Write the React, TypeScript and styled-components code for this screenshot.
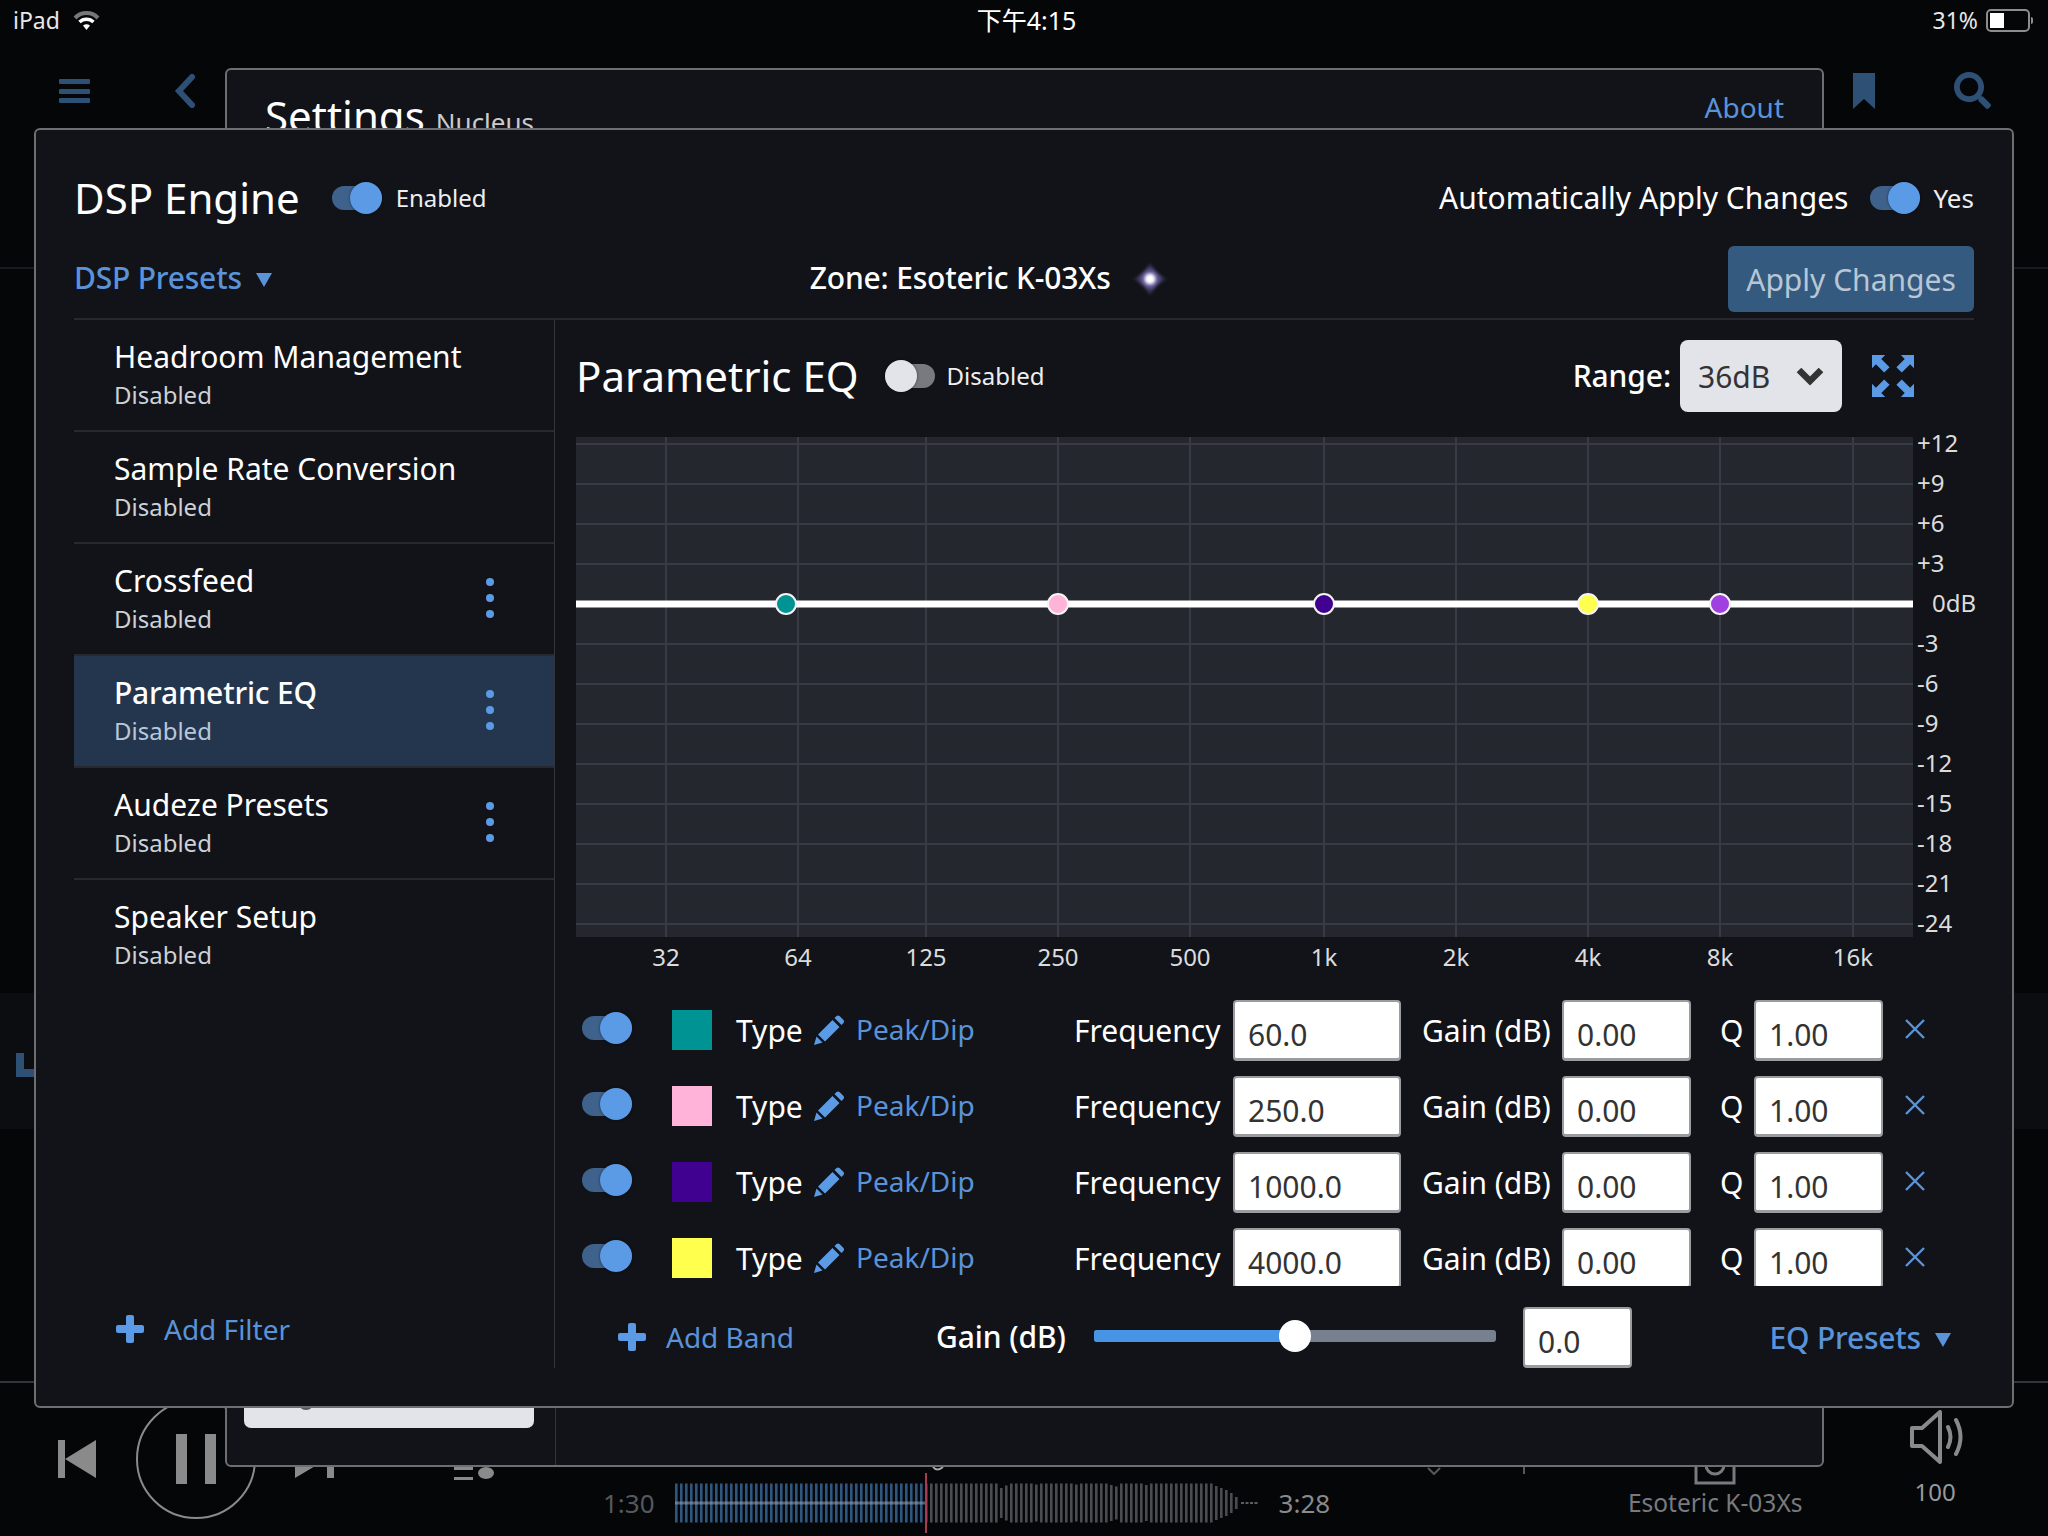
import React from 'react';
import styled, { createGlobalStyle } from 'styled-components';
import { FaSearch } from 'react-icons/fa';

const BLUE = '#5b9be6';
const LINK = '#5a93d9';
const DIM = '#2e5075';
const EDGE = '#6c6e72';
const SURFACE = '#111318';
const RULE = '#27292e';

const Global = createGlobalStyle`
  html, body { margin: 0; padding: 0; background: #050608; }
  body { font-family: "Noto Sans", "Noto Sans CJK SC", sans-serif; color: #fff; }
`;

const Page = styled.div`
  position: relative;
  width: 2048px;
  height: 1536px;
  overflow: hidden;
  background: #050608;
  display: flex;
  flex-direction: column;
`;

/* ---------- status bar ---------- */
const StatusBar = styled.div`
  height: 40px;
  display: grid;
  grid-template-columns: 1fr auto 1fr;
  align-items: center;
  padding: 0 18px 0 13px;
  font-size: 23px;
  color: #e8e8e8;
`;
const StatusLeft = styled.div`
  display: flex;
  align-items: center;
  gap: 13px;
`;
const StatusClock = styled.div`
  font-size: 25px;
  color: #fff;
  margin: -3px 0 0 10px;
`;
const StatusRight = styled.div`
  display: flex;
  align-items: center;
  justify-content: flex-end;
  gap: 8px;
`;
const Battery = styled.div`
  position: relative;
  width: 44px;
  height: 23px;
  box-sizing: border-box;
  border: 2px solid #8d8d8d;
  border-radius: 5px;
  padding: 2px;
  &::after {
    content: '';
    position: absolute;
    right: -5px;
    top: 6px;
    width: 2px;
    height: 7px;
    background: #8d8d8d;
    border-radius: 0 2px 2px 0;
  }
`;
const BatteryLevel = styled.div`
  width: 14px;
  height: 100%;
  background: #fff;
`;

/* ---------- app behind the dialog ---------- */
const AppHeader = styled.div`
  height: 229px;
  border-bottom: 2px solid #191a1e;
  display: flex;
  align-items: flex-start;
  padding: 32px 57px 0 59px;
  margin-bottom: -1px;
  box-sizing: border-box;
`;
const Burger = styled.div`
  width: 31px;
  height: 24px;
  margin-top: 7px;
  display: flex;
  flex-direction: column;
  justify-content: space-between;
  & > span {
    height: 5px;
    border-radius: 1px;
    background: ${DIM};
  }
`;
const BackIcon = styled.svg`
  width: 22px;
  height: 34px;
  margin: 2px 0 0 84px;
`;
const HeaderRight = styled.div`
  margin-left: auto;
  display: flex;
  gap: 78px;
  color: ${DIM};
`;
const Main = styled.div`
  flex: 1;
  padding-top: 725px;
`;
const Band = styled.div`
  height: 136px;
  background: #0c0d10;
  display: flex;
  align-items: flex-end;
  padding: 0 0 52px 16px;
  box-sizing: border-box;
`;
const BandMark = styled.div`
  width: 19px;
  height: 24px;
  box-sizing: border-box;
  border-left: 8px solid ${DIM};
  border-bottom: 8px solid ${DIM};
`;

const BackPanel = styled.div`
  position: absolute;
  left: 225px;
  top: 68px;
  width: 1599px;
  height: 1399px;
  box-sizing: border-box;
  background: ${SURFACE};
  border: 2px solid ${EDGE};
  border-radius: 6px;
  display: flex;
  flex-direction: column;
  padding: 21px 0 37px;
  &::after {
    content: '';
    position: absolute;
    left: 328px;
    top: 1300px;
    bottom: 0;
    width: 1px;
    background: #33353a;
  }
`;
const BackTitleRow = styled.div`
  display: flex;
  align-items: flex-start;
  padding: 0 38px 0 38px;
`;
const BackTitle = styled.div`
  font-size: 42px;
  line-height: 50px;
`;
const BackSubtitle = styled.span`
  font-size: 26px;
  margin-left: 11px;
  color: #ccc;
`;
const AboutLink = styled.div`
  margin: -4px 0 0 auto;
  font-size: 28px;
  line-height: 40px;
  color: ${LINK};
`;
const BackStrip = styled.div`
  position: relative;
  margin: auto 0 0 17px;
  width: 290px;
  height: 30px;
  border-radius: 0 0 7px 7px;
  background: #e2e4e9;
  &::before {
    content: '';
    position: absolute;
    left: 54px;
    top: -4px;
    width: 16px;
    height: 16px;
    border-radius: 50%;
    background: #55575c;
  }
`;

/* ---------- player ---------- */
const Player = styled.div`
  height: 155px;
  box-sizing: border-box;
  border-top: 2px solid #34353a;
  display: flex;
  align-items: flex-start;
  padding-left: 58px;
  color: #8a8a8a;
`;
const Transport = styled.div`
  height: 120px;
  margin-top: 16px;
  display: flex;
  align-items: center;
`;
const PlayCircle = styled.div`
  width: 120px;
  height: 120px;
  box-sizing: border-box;
  margin: 0 39px 0 40px;
  border: 2px solid #8a8a8a;
  border-radius: 50%;
  display: flex;
  align-items: center;
  justify-content: center;
  gap: 18px;
  & > span {
    width: 11px;
    height: 50px;
    background: #8a8a8a;
  }
`;
const QueueIcon = styled.svg`
  width: 41px;
  height: 46px;
  margin: 0 0 0 120px;
`;
const Timeline = styled.div`
  height: 60px;
  margin: 90px 0 0 108px;
  display: flex;
  align-items: center;
`;
const TimeText = styled.div<{ $bright?: boolean }>`
  font-size: 26px;
  color: ${p => (p.$bright ? '#8a8a8a' : '#55585c')};
`;
const Wave = styled.svg`
  width: 582px;
  height: 60px;
  margin: 0 22px 0 20px;
  overflow: visible;
`;
const TickIcon = styled.svg`
  width: 14px;
  height: 8px;
  margin: 84px 0 0 97px;
`;
const TickLine = styled.div`
  width: 2px;
  height: 7px;
  margin: 84px 0 0 82px;
  background: #55585c;
`;
const DeviceBlock = styled.div`
  margin: 64px 0 0 102px;
  width: 176px;
  display: flex;
  flex-direction: column;
  align-items: center;
`;
const DeviceIcon = styled.svg`
  width: 42px;
  height: 38px;
`;
const DeviceName = styled.div`
  font-size: 24.5px;
  line-height: 36px;
  color: #777a7e;
  white-space: nowrap;
`;
const VolumeBlock = styled.div`
  margin: 27px 0 0 103px;
  width: 58px;
  display: flex;
  flex-direction: column;
  align-items: center;
`;
const VolumeIcon = styled.svg`
  width: 58px;
  height: 54px;
  flex: none;
  margin-left: 6px;
`;
const VolumeValue = styled.div`
  margin-top: 13px;
  font-size: 24px;
  line-height: 30px;
  color: #999;
`;

/* ---------- dialog ---------- */
const Dialog = styled.div`
  position: absolute;
  left: 34px;
  top: 128px;
  width: 1980px;
  height: 1280px;
  box-sizing: border-box;
  background: ${SURFACE};
  border: 2px solid ${EDGE};
  border-radius: 6px;
  padding: 38px 38px 0 38px;
  display: flex;
  flex-direction: column;
`;
const TopRow = styled.div`
  height: 60px;
  display: flex;
  align-items: center;
`;
const DialogTitle = styled.div`
  font-size: 42px;
  margin: -2px 32px 0 0;
`;
const ToggleTrack = styled.div<{ $on: boolean }>`
  position: relative;
  width: 50px;
  height: 24px;
  flex: none;
  border-radius: 12px;
  background: ${p => (p.$on ? '#3f628c' : '#777a7e')};
  &::after {
    content: '';
    position: absolute;
    top: -4px;
    left: ${p => (p.$on ? '18px' : '0')};
    width: 32px;
    height: 32px;
    border-radius: 50%;
    background: ${p => (p.$on ? BLUE : '#e2e4ea')};
    box-shadow: 0 0 3px rgba(0, 0, 0, 0.5);
  }
`;
const ToggleText = styled.div`
  margin: -1px 0 0 14px;
  font-size: 24px;
  color: #eee;
`;
const AutoApply = styled.div`
  margin-left: auto;
  display: flex;
  align-items: center;
  gap: 22px;
  font-size: 30px;
`;
const AutoLabel = styled.span`
  margin-top: -2px;
`;
const AutoValue = styled(ToggleText)`
  margin-left: -9px;
  font-size: 26px;
`;
const SecondRow = styled.div`
  height: 66px;
  margin: 18px 0 6px;
  display: flex;
  align-items: center;
`;
const MenuLink = styled.div<{ $lift?: number }>`
  display: flex;
  align-items: center;
  gap: 14px;
  font-size: 30px;
  font-weight: 500;
  letter-spacing: -0.2px;
  color: ${LINK};
  padding-bottom: ${p => p.$lift ?? 0}px;
`;
const DownCaret = styled.span`
  width: 0;
  height: 0;
  border-left: 8px solid transparent;
  border-right: 8px solid transparent;
  border-top: 14px solid ${LINK};
  margin-top: 5px;
`;
const ZoneBlock = styled.div`
  margin-left: 538px;
  display: flex;
  align-items: center;
  gap: 19px;
  font-size: 30px;
  font-weight: 500;
  letter-spacing: -0.2px;
  padding-bottom: 4px;
`;
const ZoneStar = styled.svg`
  width: 40px;
  height: 40px;
  margin-top: 4px;
`;
const ApplyButton = styled.div`
  margin-left: auto;
  width: 246px;
  height: 66px;
  border-radius: 6px;
  background: #355a80;
  color: #b9c6d4;
  font-size: 30px;
  display: flex;
  align-items: center;
  justify-content: center;
`;
const Body = styled.div`
  height: 1048px;
  border-top: 2px solid ${RULE};
  display: flex;
`;
const Sidebar = styled.div`
  width: 481px;
  flex: none;
  box-sizing: border-box;
  border-right: 1px solid #33353a;
  display: flex;
  flex-direction: column;
`;
const FilterItem = styled.div<{ $active?: boolean; $last?: boolean }>`
  height: 112px;
  flex: none;
  box-sizing: border-box;
  display: flex;
  align-items: center;
  justify-content: space-between;
  padding: 0 60px 0 40px;
  background: ${p => (p.$active ? '#24364d' : 'transparent')};
  border-bottom: ${p => (p.$last ? 'none' : `2px solid ${RULE}`)};
`;
const FilterText = styled.div`
  align-self: flex-start;
  padding-top: 18px;
`;
const FilterName = styled.div<{ $active?: boolean }>`
  font-size: 30px;
  line-height: 38px;
  font-weight: ${p => (p.$active ? 500 : 400)};
  letter-spacing: ${p => (p.$active ? '-0.2px' : '0')};
  white-space: nowrap;
`;
const FilterStatus = styled.div<{ $active?: boolean }>`
  font-size: 24px;
  line-height: 38px;
  color: ${p => (p.$active ? '#b8c7da' : '#cdd0d5')};
`;
const Dots = styled.div`
  display: flex;
  flex-direction: column;
  gap: 8px;
  margin-top: -3px;
  & > span {
    width: 8px;
    height: 8px;
    border-radius: 50%;
    background: ${BLUE};
  }
`;
const AddFilter = styled.div`
  margin-top: auto;
  margin-bottom: 9px;
  height: 60px;
  padding-left: 41px;
  display: flex;
  align-items: center;
  gap: 19px;
  font-size: 28px;
  color: ${LINK};
`;
const PlusIcon = styled.svg`
  width: 30px;
  height: 30px;
  flex: none;
`;
const EqPane = styled.div`
  flex: 1;
  min-width: 0;
  padding-left: 21px;
  display: flex;
  flex-direction: column;
`;
const EqHeader = styled.div`
  height: 112px;
  flex: none;
  margin-bottom: 5px;
  display: flex;
  align-items: center;
  padding-right: 60px;
`;
const EqTitle = styled.div`
  font-size: 42px;
  margin: -2px 26px 0 0;
`;
const EqState = styled(ToggleText)`
  margin-left: 12px;
`;
const RangeGroup = styled.div`
  margin-left: auto;
  display: flex;
  align-items: center;
`;
const RangeLabel = styled.div`
  font-size: 30px;
  font-weight: 500;
  letter-spacing: -0.1px;
  margin: -2px 9px 0 0;
`;
const RangeSelect = styled.div`
  width: 162px;
  height: 72px;
  box-sizing: border-box;
  border-radius: 8px;
  background: #e2e4e9;
  color: #333;
  font-size: 30px;
  padding: 0 17px 0 18px;
  display: flex;
  align-items: center;
  justify-content: space-between;
`;
const ExpandIcon = styled.svg`
  width: 42px;
  height: 42px;
  margin-left: 30px;
`;
const ChartSvg = styled.svg`
  display: block;
  width: 1410px;
  height: 565px;
  margin: -10px -12px 0 0;
  flex: none;
`;
const AxisLabel = styled.text`
  font-size: 24px;
  fill: #dcdcdc;
`;
const BandList = styled.div`
  height: 294px;
  flex: none;
  overflow: hidden;
`;
const BandRow = styled.div`
  height: 76px;
  display: grid;
  grid-template-columns: 95px 64px 79px 42px 218px 159px 168px 161px 129px 63px 129px 1fr;
  align-items: center;
  font-size: 30px;
`;
const BandToggleCell = styled.div`
  padding: 0 0 4px 6px;
`;
const Swatch = styled.div<{ $color: string }>`
  width: 40px;
  height: 40px;
  background: ${p => p.$color};
  margin-left: 1px;
`;
const PencilIcon = styled.svg`
  width: 30px;
  height: 30px;
`;
const TypeValue = styled.div`
  font-size: 28px;
  color: ${LINK};
  margin-top: -2px;
`;
const FieldLabel = styled.div`
  white-space: nowrap;
`;
const TypeLabel = styled(FieldLabel)`
  padding-left: 1px;
`;
const GainLabel = styled(FieldLabel)`
  padding-left: 21px;
`;
const QLabel = styled(FieldLabel)`
  padding-left: 29px;
`;
const NumberInput = styled.input<{ $width?: number }>`
  width: ${p => (p.$width ? `${p.$width}px` : '100%')};
  height: 61px;
  box-sizing: border-box;
  margin: 0;
  border: 2px solid #9a9ca0;
  border-bottom-width: 3px;
  border-radius: 4px;
  background: #fff;
  color: #333;
  font: 30px "Noto Sans", sans-serif;
  padding: 10px 0 0 13px;
  outline: none;
`;
const RemoveIcon = styled.svg`
  width: 22px;
  height: 20px;
  margin: -2px 0 0 21px;
`;
const EqFooter = styled.div`
  height: 62px;
  flex: none;
  margin-top: 20px;
  display: flex;
  align-items: center;
  padding: 0 23px 0 41px;
`;
const AddBand = styled.div`
  display: flex;
  align-items: center;
  gap: 19px;
  width: 319px;
  font-size: 28px;
  color: ${LINK};
`;
const MasterLabel = styled.div`
  width: 158px;
  margin-top: -2px;
  font-size: 30px;
  font-weight: 500;
  letter-spacing: -0.1px;
  white-space: nowrap;
`;
const Slider = styled.div`
  position: relative;
  width: 402px;
  height: 12px;
  border-radius: 3px;
  background: #76808f;
  margin: -2px 27px 0 0;
`;
const SliderFill = styled.div<{ $pct: number }>`
  width: ${p => p.$pct}%;
  height: 100%;
  border-radius: 3px 0 0 3px;
  background: #4694e3;
`;
const SliderThumb = styled.div<{ $pct: number }>`
  position: absolute;
  top: -10px;
  left: ${p => p.$pct}%;
  width: 32px;
  height: 32px;
  margin-left: -16px;
  border-radius: 50%;
  background: #fff;
`;
const FooterMenu = styled(MenuLink)`
  margin-left: auto;
`;

/* ---------- data ---------- */
const FILTERS = [
  { name: 'Headroom Management' },
  { name: 'Sample Rate Conversion' },
  { name: 'Crossfeed', menu: true },
  { name: 'Parametric EQ', menu: true, active: true },
  { name: 'Audeze Presets', menu: true },
  { name: 'Speaker Setup', last: true },
];
const BANDS = [
  { color: '#009393', freq: '60.0' },
  { color: '#ffb3d9', freq: '250.0' },
  { color: '#400090', freq: '1000.0' },
  { color: '#ffff4d', freq: '4000.0' },
];
const X_TICKS: [number, string][] = [
  [666, '32'], [798, '64'], [926, '125'], [1058, '250'], [1190, '500'],
  [1324, '1k'], [1456, '2k'], [1588, '4k'], [1720, '8k'], [1853, '16k'],
];
const Y_TICKS = ['+12', '+9', '+6', '+3', '0dB', '-3', '-6', '-9', '-12', '-15', '-18', '-21', '-24'];
const POINTS: [number, string][] = [
  [786, '#009393'], [1058, '#ffb3d9'], [1324, '#400090'], [1588, '#ffff4d'], [1720, '#a040e0'],
];

const Toggle = ({ on }: { on: boolean }) => <ToggleTrack $on={on} />;
const Plus = () => (
  <PlusIcon viewBox="0 0 30 30">
    <path d="M11 3a2 2 0 0 1 2-2h4a2 2 0 0 1 2 2v8h8a2 2 0 0 1 2 2v4a2 2 0 0 1-2 2h-8v8a2 2 0 0 1-2 2h-4a2 2 0 0 1-2-2v-8H3a2 2 0 0 1-2-2v-4a2 2 0 0 1 2-2h8z" fill={BLUE} />
  </PlusIcon>
);
const Pencil = () => (
  <PencilIcon viewBox="0 0 30 30">
    <path d="M0 30 L2.5 21.5 L8.5 27.5 Z M4 19.5 L18.5 5 L25.5 12 L11 26.5 Z M20.5 3 L22.5 1 Q24 0 25.5 1 L29.5 5 Q30.5 6.5 29.5 8 L27.5 10 Z" fill={BLUE} />
  </PencilIcon>
);

const Chart = () => (
  <ChartSvg viewBox="0 -10 1410 565">
    <rect x="0" y="0" width="1337" height="500" fill="#24272e" />
    {Y_TICKS.map((_, i) => (
      <rect key={i} x="0" y={6 + i * 40} width="1337" height="2" fill="#383b43" />
    ))}
    {X_TICKS.map(([x]) => (
      <rect key={x} x={x - 577} y="0" width="2" height="500" fill="#383b43" />
    ))}
    <rect x="0" y="163.5" width="1337" height="7" fill="#fff" />
    {POINTS.map(([x, c]) => (
      <circle key={x} cx={x - 576} cy="167" r="10" fill={c} stroke="#f4f4f4" strokeWidth="2" />
    ))}
    {Y_TICKS.map((t, i) => (
      <AxisLabel key={t} x={t === '0dB' ? 1356 : 1341} y={15 + i * 40}>{t}</AxisLabel>
    ))}
    {X_TICKS.map(([x, t]) => (
      <AxisLabel key={t} x={x - 576} y="529" textAnchor="middle">{t}</AxisLabel>
    ))}
  </ChartSvg>
);

const DIPS: Record<number, number> = { 15: 30, 16: 35, 37: 36, 38: 33, 22: 37, 30: 37, 44: 36 };
const TAIL: Record<number, number> = { 108: 34, 109: 30, 110: 26, 111: 20, 112: 12 };
const WaveForm = () => {
  const bars = [];
  for (let i = 0; i < 113; i++) {
    const x = i * 5;
    let h = 39;
    if (i > 50 && DIPS[i - 50]) h = DIPS[i - 50];
    if (TAIL[i]) h = TAIL[i];
    bars.push(<rect key={i} x={x} y={30 - h / 2} width="2.6" height={h} fill={x < 250 ? '#2f5680' : '#4a4c52'} />);
  }
  for (let i = 0; i < 4; i++) {
    bars.push(<rect key={`d${i}`} x={566 + i * 4.5} y="29" width="3" height="2" fill="#5a5c60" />);
  }
  return (
    <Wave viewBox="0 0 582 60">
      {bars}
      <rect x="0" y="28.5" width="250" height="3" fill="#9aa6b4" opacity="0.55" />
      <rect x="250" y="0" width="2" height="60" fill="#a83a55" />
      <path d="M258 -6 Q262 -1 268 -6" fill="none" stroke="#aaa" strokeWidth="2" />
    </Wave>
  );
};

export default function App() {
  return (
    <Page>
      <Global />
      <StatusBar>
        <StatusLeft>
          <span>iPad</span>
          <svg width="27" height="20" viewBox="0 0 27 20">
            <path d="M2 8 A16 16 0 0 1 25 8" fill="none" stroke="#777" strokeWidth="4" />
            <path d="M6.5 12 A10 10 0 0 1 20.5 12" fill="none" stroke="#fff" strokeWidth="3.5" />
            <path d="M10 15.5 Q13.5 13 17 15.5 L13.5 20Z" fill="#fff" />
          </svg>
        </StatusLeft>
        <StatusClock>下午4:15</StatusClock>
        <StatusRight>
          <span>31%</span>
          <Battery><BatteryLevel /></Battery>
        </StatusRight>
      </StatusBar>

      <AppHeader>
        <Burger><span /><span /><span /></Burger>
        <BackIcon viewBox="0 0 22 34">
          <path d="M18 3 L5 17 L18 31" fill="none" stroke={DIM} strokeWidth="6" strokeLinecap="round" />
        </BackIcon>
        <HeaderRight>
          <svg width="24" height="37" viewBox="0 0 24 37">
            <path d="M1 1 H23 V37 L12 27 L1 37 Z" fill={DIM} />
          </svg>
          <FaSearch size={37} />
        </HeaderRight>
      </AppHeader>

      <Main>
        <Band><BandMark /></Band>
      </Main>

      <Player>
        <Transport>
          <svg width="38" height="38" viewBox="0 0 38 38">
            <path d="M0 0 H7 V38 H0 Z M38 0 V38 L7 19 Z" fill="#8a8a8a" />
          </svg>
          <PlayCircle><span /><span /></PlayCircle>
          <svg width="39" height="38" viewBox="0 0 39 38">
            <path d="M32 0 H39 V38 H32 Z M0 0 L32 19 L0 38 Z" fill="#8a8a8a" />
          </svg>
          <QueueIcon viewBox="0 0 41 46">
            <path d="M0 31h19v3H0zM0 41h19v3H0z" fill="#8a8a8a" />
            <ellipse cx="32" cy="37" rx="8" ry="6" fill="#8a8a8a" />
          </QueueIcon>
        </Transport>
        <Timeline>
          <TimeText>1:30</TimeText>
          <WaveForm />
          <TimeText $bright>3:28</TimeText>
        </Timeline>
        <TickIcon viewBox="0 0 14 8">
          <path d="M1 1 L7 7 L13 1" fill="none" stroke="#55585c" strokeWidth="2" />
        </TickIcon>
        <TickLine />
        <DeviceBlock>
          <DeviceIcon viewBox="0 0 42 38">
            <path d="M2 2 H40 V36 H2 Z" fill="none" stroke="#777a7e" strokeWidth="3" />
            <circle cx="21" cy="18" r="9" fill="none" stroke="#777a7e" strokeWidth="3" />
          </DeviceIcon>
          <DeviceName>Esoteric K-03Xs</DeviceName>
        </DeviceBlock>
        <VolumeBlock>
          <VolumeIcon viewBox="0 0 56 54">
            <path d="M2 18 H12 L30 2 V52 L12 36 H2 Z" fill="none" stroke="#8a8a8a" strokeWidth="4" strokeLinejoin="round" />
            <path d="M38 17 Q43 27 38 37 M46 10 Q55 27 46 44" fill="none" stroke="#8a8a8a" strokeWidth="4" strokeLinecap="round" />
          </VolumeIcon>
          <VolumeValue>100</VolumeValue>
        </VolumeBlock>
      </Player>

      <BackPanel>
        <BackTitleRow>
          <BackTitle>Settings<BackSubtitle>Nucleus</BackSubtitle></BackTitle>
          <AboutLink>About</AboutLink>
        </BackTitleRow>
        <BackStrip />
      </BackPanel>

      <Dialog>
        <TopRow>
          <DialogTitle>DSP Engine</DialogTitle>
          <Toggle on />
          <ToggleText>Enabled</ToggleText>
          <AutoApply>
            <AutoLabel>Automatically Apply Changes</AutoLabel>
            <Toggle on />
            <AutoValue>Yes</AutoValue>
          </AutoApply>
        </TopRow>
        <SecondRow>
          <MenuLink $lift={4}>DSP Presets <DownCaret /></MenuLink>
          <ZoneBlock>
            <span>Zone: Esoteric K-03Xs</span>
            <ZoneStar viewBox="0 0 40 40">
              <defs>
                <radialGradient id="zoneGlow">
                  <stop offset="0" stopColor="#cfc6f5" stopOpacity="1" />
                  <stop offset="0.4" stopColor="#7a6cb8" stopOpacity="0.8" />
                  <stop offset="1" stopColor="#2c2650" stopOpacity="0" />
                </radialGradient>
                <filter id="zoneBlur" x="-20%" y="-20%" width="140%" height="140%">
                  <feGaussianBlur stdDeviation="1.4" />
                </filter>
              </defs>
              <path d="M20 1 Q24 16 39 20 Q24 24 20 39 Q16 24 1 20 Q16 16 20 1Z" fill="url(#zoneGlow)" filter="url(#zoneBlur)" />
              <circle cx="20" cy="20" r="5" fill="#fff" filter="url(#zoneBlur)" />
            </ZoneStar>
          </ZoneBlock>
          <ApplyButton>Apply Changes</ApplyButton>
        </SecondRow>
        <Body>
          <Sidebar>
            {FILTERS.map(f => (
              <FilterItem key={f.name} $active={f.active} $last={f.last}>
                <FilterText>
                  <FilterName $active={f.active}>{f.name}</FilterName>
                  <FilterStatus $active={f.active}>Disabled</FilterStatus>
                </FilterText>
                {f.menu && <Dots><span /><span /><span /></Dots>}
              </FilterItem>
            ))}
            <AddFilter><Plus />Add Filter</AddFilter>
          </Sidebar>
          <EqPane>
            <EqHeader>
              <EqTitle>Parametric EQ</EqTitle>
              <Toggle on={false} />
              <EqState>Disabled</EqState>
              <RangeGroup>
                <RangeLabel>Range:</RangeLabel>
                <RangeSelect>
                  36dB
                  <svg width="30" height="22" viewBox="0 0 30 22">
                    <path d="M4 5 L15 16 L26 5" fill="none" stroke="#333" strokeWidth="6.5" />
                  </svg>
                </RangeSelect>
                <ExpandIcon viewBox="0 0 43 43">
                  {[
                    'translate(0 0)',
                    'translate(43 0) scale(-1 1)',
                    'translate(0 43) scale(1 -1)',
                    'translate(43 43) scale(-1 -1)',
                  ].map(t => (
                    <path key={t} transform={t} d="M0 0H13.5L9.5 4L18 12.5L12.5 18L4 9.5L0 13.5Z" fill={BLUE} />
                  ))}
                </ExpandIcon>
              </RangeGroup>
            </EqHeader>
            <Chart />
            <BandList>
              {BANDS.map(b => (
                <BandRow key={b.freq}>
                  <BandToggleCell><Toggle on /></BandToggleCell>
                  <Swatch $color={b.color} />
                  <TypeLabel>Type</TypeLabel>
                  <Pencil />
                  <TypeValue>Peak/Dip</TypeValue>
                  <FieldLabel>Frequency</FieldLabel>
                  <NumberInput readOnly value={b.freq} />
                  <GainLabel>Gain (dB)</GainLabel>
                  <NumberInput readOnly value="0.00" />
                  <QLabel>Q</QLabel>
                  <NumberInput readOnly value="1.00" />
                  <RemoveIcon viewBox="0 0 22 20">
                    <path d="M2 1 L20 19 M20 1 L2 19" fill="none" stroke={LINK} strokeWidth="2.4" />
                  </RemoveIcon>
                </BandRow>
              ))}
            </BandList>
            <EqFooter>
              <AddBand><Plus />Add Band</AddBand>
              <MasterLabel>Gain (dB)</MasterLabel>
              <Slider>
                <SliderFill $pct={50} />
                <SliderThumb $pct={50} />
              </Slider>
              <NumberInput readOnly value="0.0" $width={109} />
              <FooterMenu>EQ Presets <DownCaret /></FooterMenu>
            </EqFooter>
          </EqPane>
        </Body>
      </Dialog>
    </Page>
  );
}
